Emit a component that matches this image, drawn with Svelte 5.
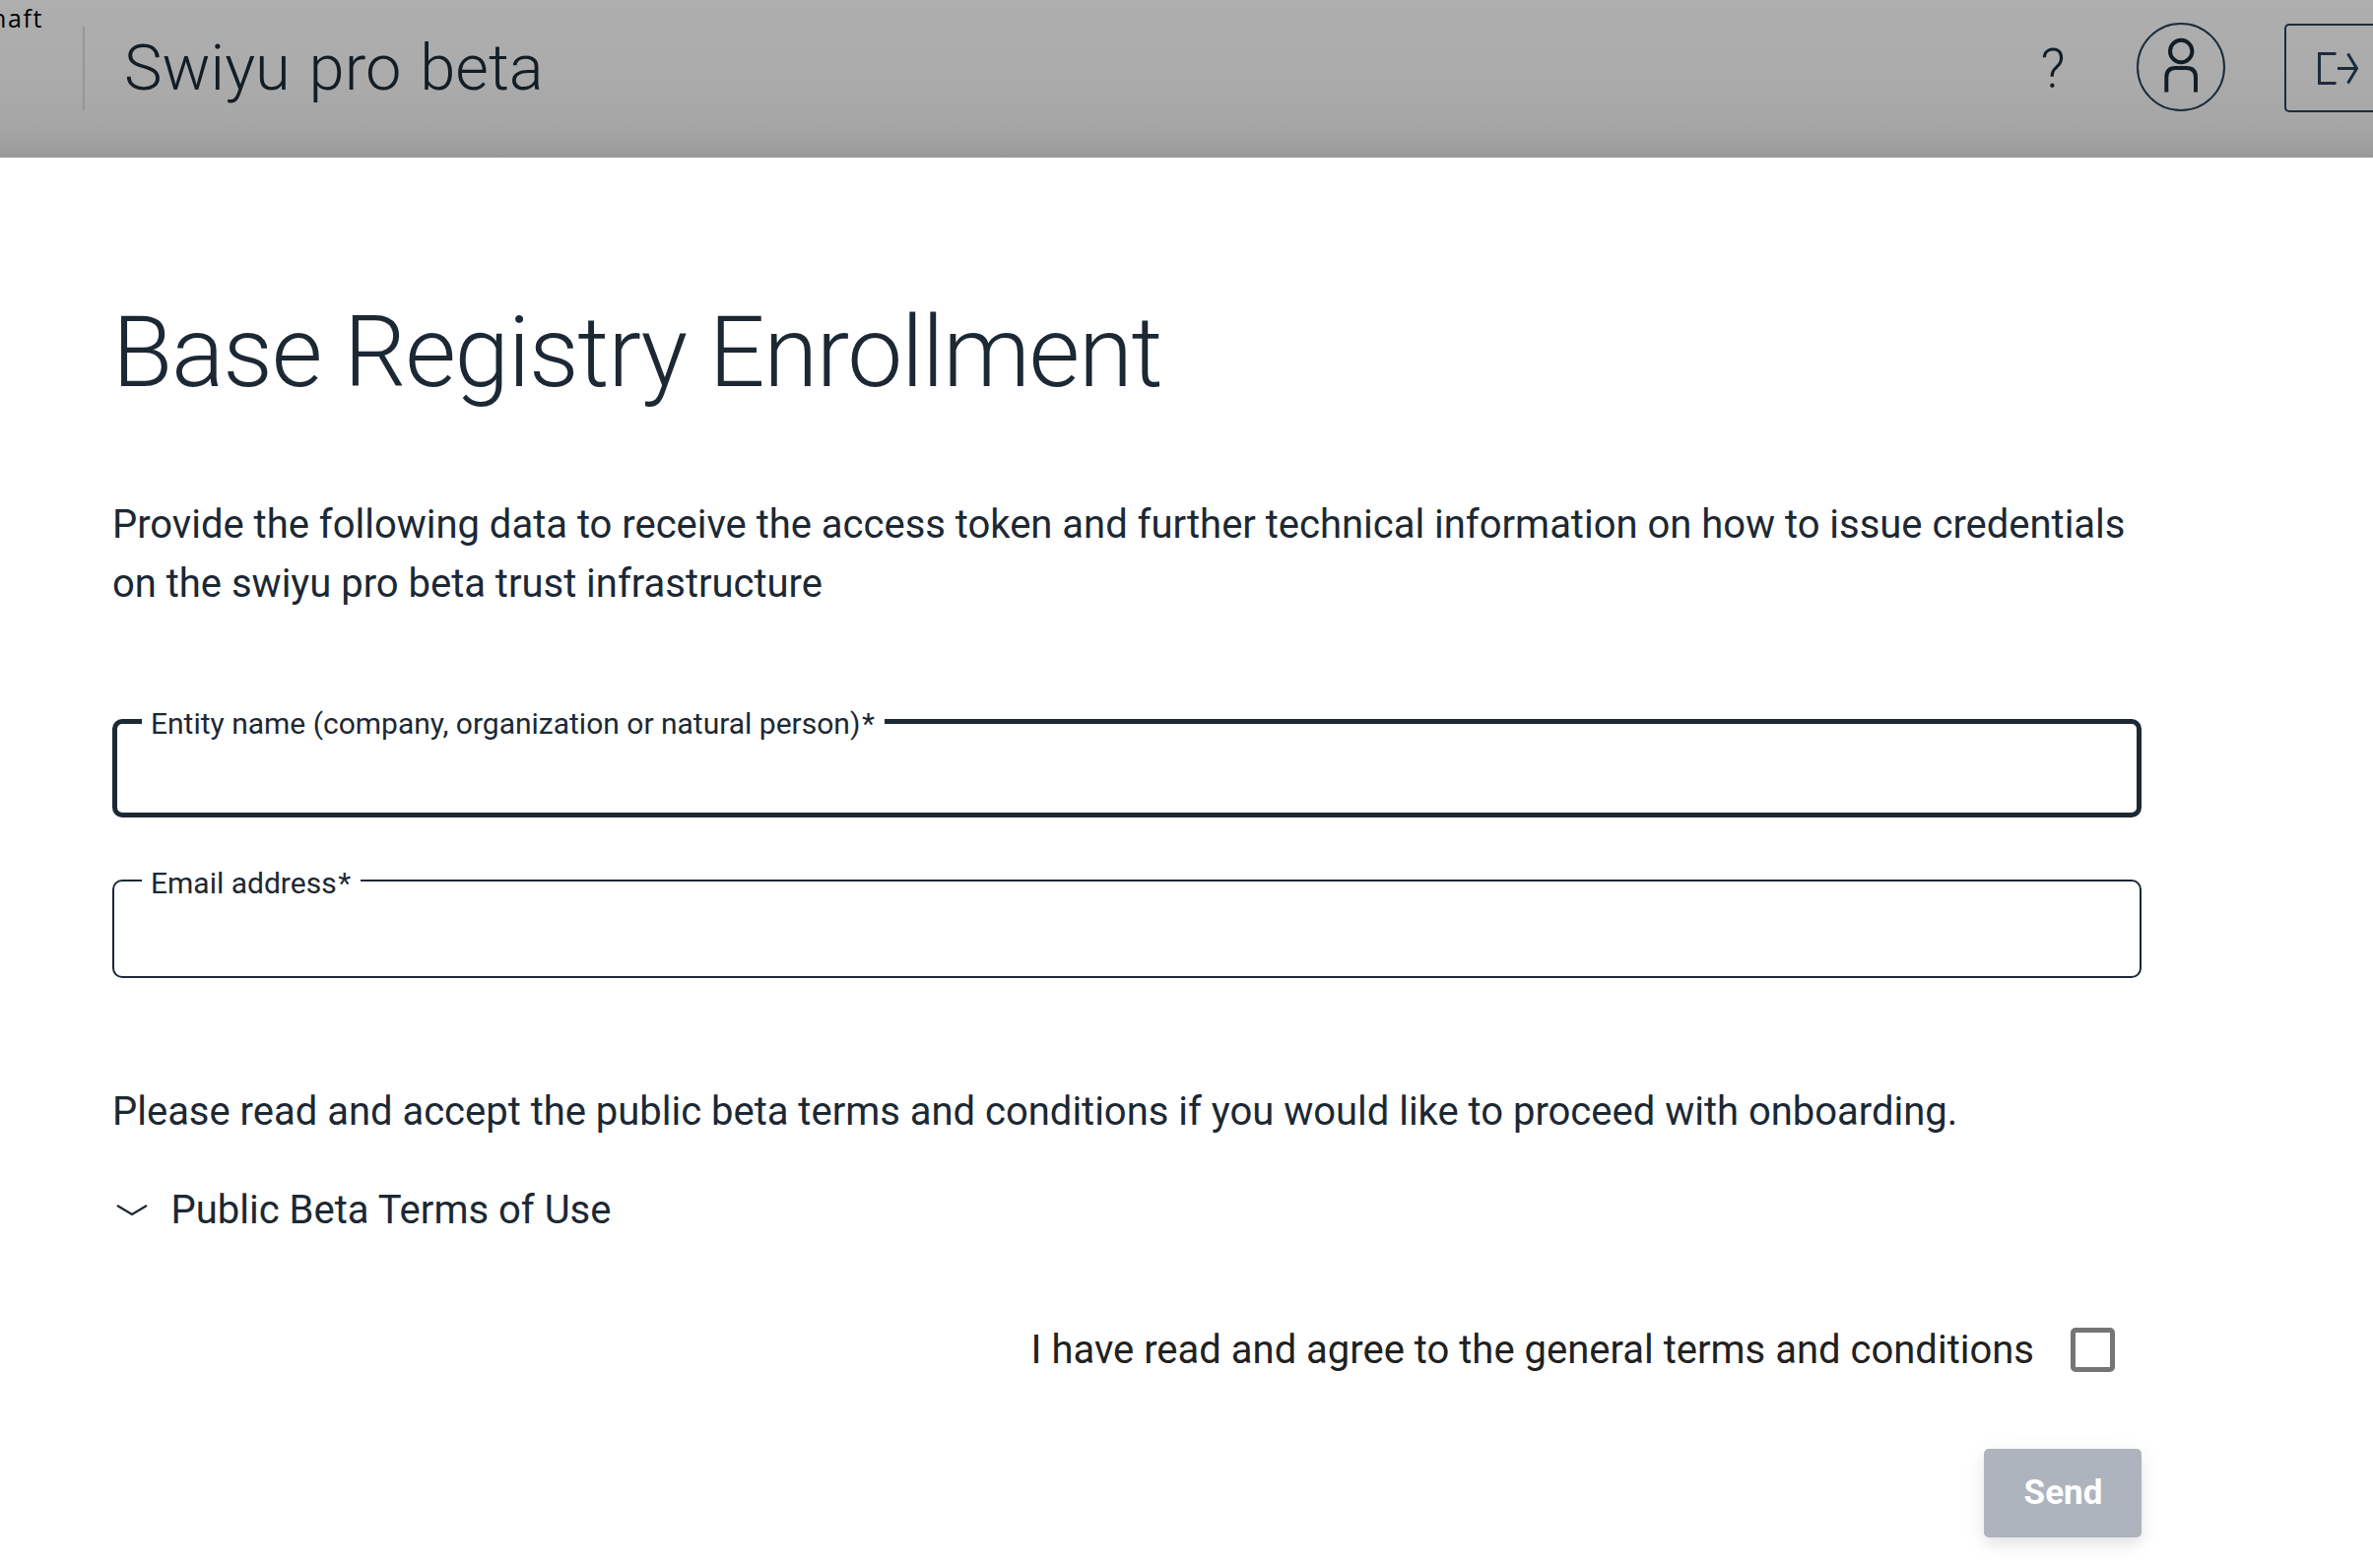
<script lang="ts">
  let entity = $state('');
  let email = $state('');
</script>

<div class="page">
  <header>
    <span class="brand">haft</span>
    <div class="divider"></div>
    <div class="app-name">Swiyu pro beta</div>
    <div class="help">?</div>
    <div class="avatar">
      <svg width="36" height="56" viewBox="0 0 36 56" fill="none" stroke="#131d25" stroke-width="4">
        <circle cx="18.2" cy="14" r="11.2" />
        <path d="M3.300 55.500V40.500Q3.300 31 12.500 31H23.500Q33 31 33 40.500V55.500" />
      </svg>
    </div>
    <div class="logout">
      <svg width="44" height="34" viewBox="0 0 44 34" fill="none" stroke="#1c2c3b" stroke-width="3">
        <path d="M19.500 1.500H2.500V31.500H19.500M21 16.500H40.500M31.500 1.500L40.500 16.500L31.500 31.500" />
      </svg>
    </div>
  </header>
  <main>
    <h1>Base Registry Enrollment</h1>
    <p class="intro">Provide the following data to receive the access token and further technical information on how to issue credentials on the swiyu pro beta trust infrastructure</p>
    <fieldset class="focused">
      <legend>Entity name (company, organization or natural person)<span>*</span></legend>
      <input bind:value={entity} aria-label="Entity name" />
    </fieldset>
    <fieldset>
      <legend>Email address<span>*</span></legend>
      <input bind:value={email} aria-label="Email address" />
    </fieldset>
    <p class="terms">Please read and accept the public beta terms and conditions if you would like to proceed with onboarding.</p>
    <div class="expander">
      <svg width="32" height="14" viewBox="0 0 32 14" fill="none" stroke="#1c2834" stroke-width="2.300"><path d="M1 2L16 11L31 2" /></svg>
      <span>Public Beta Terms of Use</span>
    </div>
    <div class="agree">
      <span>I have read and agree to the general terms and conditions</span>
      <div class="box"></div>
    </div>
    <button>Send</button>
  </main>
</div>

<style>
  :global(body) { background: #fff; overflow: hidden; }
  .page { width: 2409px; height: 1592px; overflow: hidden; box-sizing: border-box; font-family: Roboto, sans-serif; color: #1c2834; }
  header { height: 160px; display: flex; align-items: flex-start; box-sizing: border-box; background: linear-gradient(#aeaeae 0, #ababab 80px, #a6a6a6 125px, #9f9f9f 150px, #979797 160px); overflow: hidden; }
  .brand { width: 44px; height: 40px; display: flex; justify-content: flex-end; font: 400 25px/37px "Open Sans", sans-serif; letter-spacing: 1.6px; color: #000; white-space: nowrap; }
  .divider { width: 2px; height: 85px; margin: 27px 0 0 40px; background: #92979d; }
  .app-name { margin-left: 40px; font-size: 65px; line-height: 76px; margin-top: 31px; font-weight: 300; word-spacing: 3px; color: #131d25; }
  .help { margin: 38px 55px 0 auto; width: 60px; text-align: center; font-size: 55px; line-height: 64px; font-weight: 300; color: #131d25; }
  .avatar { box-sizing: border-box; width: 90px; height: 90px; margin-top: 23px; border: 2px solid #1c2c3b; border-radius: 50%; display: flex; justify-content: center; padding-top: 13px; }
  .logout { box-sizing: border-box; width: 90px; height: 90px; margin: 24px 0 0 60px; border: 2px solid #1c2c3b; border-right: 0; border-radius: 5px 0 0 5px; padding: 27px 0 0 31px; }
  main { padding: 0 235px 0 114px; display: flex; flex-direction: column; }
  h1 { margin: 138px 0 0; font-size: 100px; line-height: 120px; font-weight: 300; letter-spacing: -1.33px; }
  p { margin: 0; font-size: 40px; line-height: 60px; letter-spacing: -0.015px; }
  .intro { margin-top: 85px; }
  fieldset { margin: 0; min-width: 0; height: 117px; box-sizing: border-box; border: 2px solid #1c2834; border-radius: 10px; padding: 0 28px; }
  .focused { height: 115px; border-width: 5px; padding: 0 25px; margin: 92px 0 46px; }
  legend { font-size: 30px; line-height: 30px; padding: 6px 10px 0 9px; }
  .focused legend { padding-top: 5px; }
  legend span { margin-left: 1.5px; }
  input { width: 100%; height: 60px; border: 0; padding: 0; outline: 0; background: none; font: 40px Roboto, sans-serif; }
  .terms { margin-top: 106px; }
  .expander { display: flex; align-items: center; gap: 23.5px; margin: 40px 0 0 4px; font-size: 40px; line-height: 60px; }
  .agree { display: flex; justify-content: flex-end; align-items: center; gap: 37px; margin: 80px 27px 0 0; font-size: 40px; line-height: 60px; color: #212121; }
  .agree span { padding-top: 2px; }
  .box { box-sizing: border-box; width: 45px; height: 45px; border: 5px solid #757575; border-radius: 5px; }
  button { align-self: flex-end; width: 160px; height: 90px; margin-top: 70px; padding: 0 0 2px 1px; border: 0; border-radius: 5px; background: #adb4be; color: #fff; font: 700 35px Roboto, sans-serif; box-shadow: 0 5px 25px rgba(0,0,0,.07), 0 8px 12px rgba(0,0,0,.05); }
</style>
